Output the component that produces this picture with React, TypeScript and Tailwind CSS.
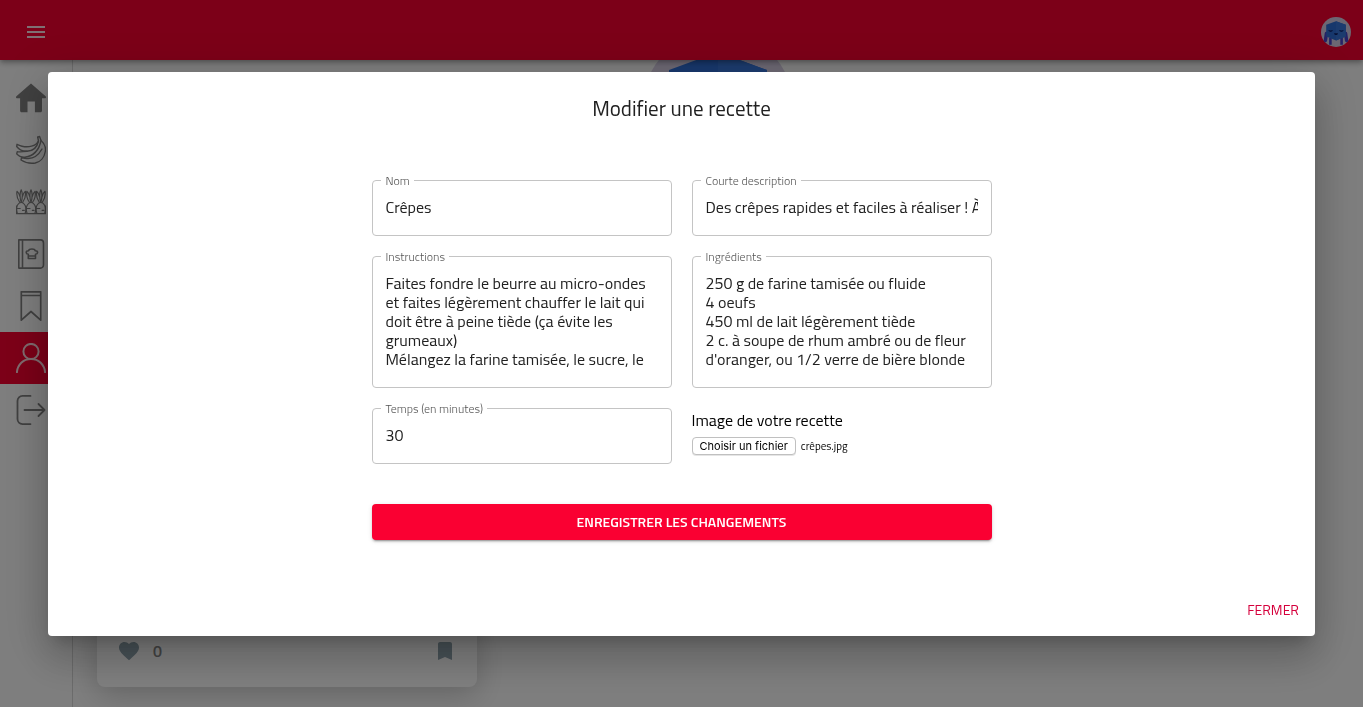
import type { ReactNode } from "react";

const ICON = "h-[30px] w-[30px] shrink-0";

function HomeIcon() {
  return (
    <svg viewBox="0 0 30 30" className={ICON} fill="currentColor">
      <path d="M15 .5 29.600 13.300c.8.8.3 1.900-.7 1.900H26v12.600c0 .9-.6 1.500-1.500 1.500h-5.600V18.500h-7.400v10.800H5.600c-.9 0-1.500-.6-1.500-1.500V15.200H1.100c-1 0-1.500-1.100-.7-1.900z" />
    </svg>
  );
}

function BananaIcon() {
  return (
    <svg viewBox="0 0 30 30" className={ICON} fill="none" stroke="currentColor" strokeWidth="1.400" strokeLinecap="round" strokeLinejoin="round">
      <path d="M21.700 2.200 23.600 1.500 25 5.500c3.500 3 5 7 4.300 11-1 6-5 10.500-10 11.500-5 .8-10-.2-14.300-3l.5-2.200 3.500.4" />
      <path d="M21.700 2.200 22.500 6C20 11.500 12 12.500 6 11.200 4 10.800 2.500 10 1 9.300L.7 11.500C3 14.500 7 16.500 11 16.300" />
      <path d="M22.500 6C21 12.500 17 16.200 11 16.300 7 16.500 4 17 1.200 16.800L.7 18.800C3 21.500 6 22.500 9 22.200 17 21 23 15.500 25 5.500" />
      <path d="M9 23.200C16 24.500 22 21 26 14" />
    </svg>
  );
}

function CarrotsIcon() {
  return (
    <svg viewBox="0 0 30 30" className={ICON} fill="none" stroke="currentColor" strokeWidth="1.200" strokeLinecap="round" strokeLinejoin="round">
      {[0, 9.800, 19.600].map((x) => (
        <g key={x} transform={`translate(${x} 0)`}>
          <path d="M5.200 15.500C3.600 10 3.600 6 5.200 2.800 6.800 6 6.800 10 5.200 15.500M3.800 15.500C1.200 12 .4 8 1 4.300 2.400 5.500 3.400 7.500 3.800 9.500M6.600 15.500c2.600-3.500 3.400-7.500 2.800-11.200C8 5.500 7 7.500 6.600 9.500" />
          <path d="M1.300 26.500C.1 23 .3 20 1.500 18c.9-1.600 2.200-2.500 3.700-2.500s2.800.9 3.700 2.500c1.200 2 1.400 5 .2 8.500M1.500 21.500h2.700M6.500 23.300h1.800" />
        </g>
      ))}
      <path d="M.6 19v7.700h28.800V19" />
    </svg>
  );
}

function RecipeBookIcon() {
  return (
    <svg viewBox="0 0 30 30" className={ICON} fill="none" stroke="currentColor" strokeWidth="1.600" strokeLinejoin="round">
      <path d="M2.800.9h21.700a3 3 0 0 1 3 3v22.200a3 3 0 0 1-3 3H2.800zM6.500.9v28.200" />
      <path d="M12.300 19.500v-4.200c-3-.5-2.600-3.500.2-3.500.8-2.500 6-2.500 6.800 0 2.800 0 3.200 3 .2 3.500v4.200zM12.300 17h7.200" />
    </svg>
  );
}

function SavedIcon() {
  return (
    <svg viewBox="0 0 30 30" className={ICON} fill="none" stroke="currentColor" strokeWidth="1.700" strokeLinejoin="round">
      <path d="M5.300.8h19.400v28.400L15 20.500l-9.700 8.700zM5.300 4.500h19.400" />
    </svg>
  );
}

function UserIcon() {
  return (
    <svg viewBox="0 0 30 30" className={ICON} fill="none" stroke="currentColor" strokeWidth="2" strokeLinecap="round">
      <circle cx="15" cy="8.500" r="7.600" />
      <path d="M.9 29.500C1.500 21.500 7.300 16 15 16s13.500 5.500 14.100 13.500" />
    </svg>
  );
}

function LogoutIcon() {
  return (
    <svg viewBox="0 0 30 30" className={ICON} fill="none" stroke="currentColor" strokeWidth="1.800" strokeLinecap="round" strokeLinejoin="round">
      <path d="M14.500.9H6.500a5 5 0 0 0-5 5v18.200a5 5 0 0 0 5 5h8M8.500 15h20M22.500 9l6 6-6 6" />
    </svg>
  );
}

function Mascot({ className }: { className: string }) {
  return (
    <svg viewBox="0 0 150 150" className={className} role="img" aria-label="Avatar">
      <circle cx="75" cy="75" r="75" fill="#d9cfe6" />
      <path d="M27 82 22 118M123 82l5 36" stroke="#4a45cc" strokeWidth="17" strokeLinecap="round" />
      <path d="M47 105v34M103 105v34" stroke="#4a45cc" strokeWidth="13" />
      <path d="M75 21 124 39v58L75 118 26 97V39z" fill="#2f6fd8" />
      <path d="M75 21 124 39v58L75 118z" fill="#3877dc" />
      <path d="M38 68q11 8 20 0M92 68q11 8 20 0M67 84q8 10 16 0z" fill="#10246c" stroke="#10246c" strokeWidth="5" />
    </svg>
  );
}

const navItems: { label: string; icon: ReactNode; active?: boolean }[] = [
  { label: "Accueil", icon: <HomeIcon /> },
  { label: "Fruits", icon: <BananaIcon /> },
  { label: "Légumes", icon: <CarrotsIcon /> },
  { label: "Recettes", icon: <RecipeBookIcon /> },
  { label: "Favoris", icon: <SavedIcon /> },
  { label: "Profil", icon: <UserIcon />, active: true },
  { label: "Déconnexion", icon: <LogoutIcon /> },
];

const instructions = `Faites fondre le beurre au micro-ondes et faites légèrement chauffer le lait qui doit être à peine tiède (ça évite les grumeaux)
Mélangez la farine tamisée, le sucre, le`;

const ingredients = `250 g de farine tamisée ou fluide
4 oeufs
450 ml de lait légèrement tiède
2 c. à soupe de rhum ambré ou de fleur d'oranger, ou 1/2 verre de bière blonde`;

function Field({ id, label, value, multiline }: { id: string; label: string; value: string; multiline?: boolean }) {
  return (
    <div className="relative rounded border border-[#c4c4c4] px-[13px] pt-[17px] pb-[18px] text-base leading-[19px] text-[#212121]">
      <label htmlFor={id} className="absolute -top-2 left-2 bg-white pr-1 pl-[5px] text-xs leading-4 font-light text-[#555555]">
        {label}
      </label>
      {multiline ? (
        <textarea id={id} rows={5} defaultValue={value} className="block w-full resize-none overflow-hidden outline-none" />
      ) : (
        <input id={id} type="text" defaultValue={value} className="block h-[19px] w-full outline-none" />
      )}
    </div>
  );
}

export default function App() {
  return (
    <div className="flex min-h-screen flex-col bg-[#fdfdfd] font-['Titillium_Web','Roboto',sans-serif]">
      <header className="fixed inset-x-0 top-0 z-10 flex h-[60px] items-center justify-between bg-[#f80030] px-3 pt-1 shadow-[0_2px_4px_-1px_rgba(0,0,0,0.2),0_4px_5px_rgba(0,0,0,0.14),0_1px_10px_rgba(0,0,0,0.12)]">
        <button type="button" aria-label="Menu" className="p-3 text-[#ffe0e6]">
          <svg viewBox="0 0 24 24" className="h-6 w-6" fill="currentColor">
            <path d="M3 18h18v-2H3v2zm0-5h18v-2H3v2zm0-7v2h18V6H3z" />
          </svg>
        </button>
        <Mascot className="h-[30px] w-[30px]" />
      </header>

      <div className="flex grow">
        <nav className="w-[73px] shrink-0 border-r border-[#d8d8d8] pt-[72px]">
          {navItems.map((item) => (
            <a
              key={item.label}
              href="#"
              aria-label={item.label}
              className={item.active ? "flex h-[52px] items-center bg-[#f80030] px-4 text-[#ffd5dd]" : "flex h-[52px] items-center px-4 text-[#808080]"}
            >
              {item.icon}
            </a>
          ))}
        </nav>
        <main className="flex grow flex-col px-6 pt-[31px] pb-5">
          <Mascot className="h-[150px] w-[150px] self-center" />
          <article className="mt-auto flex w-[380px] max-w-full items-center rounded-lg bg-white px-5 pt-10 pb-6 text-[#90a4ae] shadow-[0_8px_30px_rgba(0,0,0,0.2)]">
            <svg viewBox="0 0 24 24" className="h-6 w-6" fill="currentColor">
              <path d="m12 21.350-1.450-1.320C5.400 15.360 2 12.280 2 8.500 2 5.420 4.420 3 7.500 3c1.740 0 3.410.81 4.500 2.090C13.090 3.810 14.760 3 16.500 3 19.580 3 22 5.420 22 8.500c0 3.780-3.400 6.860-8.550 11.540L12 21.350z" />
            </svg>
            <span className="ml-3 text-base leading-6 font-semibold text-[#888888]">0</span>
            <svg viewBox="0 0 24 24" className="ml-auto h-6 w-6" fill="currentColor">
              <path d="M17 3H7c-1.100 0-2 .9-2 2v16l7-3 7 3V5c0-1.100-.9-2-2-2z" />
            </svg>
          </article>
        </main>
      </div>

      <div className="fixed inset-0 z-20 flex items-center justify-center bg-black/50 px-12">
        <div
          role="dialog"
          aria-modal="true"
          aria-labelledby="dialog-title"
          className="flex max-h-full w-full flex-col rounded bg-white shadow-[0_11px_15px_-7px_rgba(0,0,0,0.2),0_24px_38px_3px_rgba(0,0,0,0.14),0_9px_46px_8px_rgba(0,0,0,0.12)]"
        >
          <h2 id="dialog-title" className="px-6 py-5 text-center text-[21px] leading-8 text-[#212121]">
            Modifier une recette
          </h2>
          <form className="mx-auto grid w-[620px] max-w-full grid-cols-2 gap-5 pt-9 pb-11">
            <Field id="name" label="Nom" value="Crêpes" />
            <Field id="description" label="Courte description" value="Des crêpes rapides et faciles à réaliser ! À" />
            <Field id="instructions" label="Instructions" value={instructions} multiline />
            <Field id="ingredients" label="Ingrédients" value={ingredients} multiline />
            <Field id="time" label="Temps (en minutes)" value="30" />
            <div className="text-black">
              <p className="text-base leading-6">Image de votre recette</p>
              <div className="mt-[5px] flex items-center gap-[5px] text-[11px] leading-4">
                <label htmlFor="image" className="rounded border border-[#c0c0c0] bg-white px-[7px] font-['Inter',sans-serif] shadow-[0_1px_0_rgba(0,0,0,0.1)]">
                  Choisir un fichier
                </label>
                <input id="image" type="file" className="sr-only" />
                <span>crêpes.jpg</span>
              </div>
            </div>
            <button
              type="submit"
              className="col-span-2 mt-5 h-9 rounded bg-[#fa0032] text-sm font-semibold text-white shadow-[0_3px_1px_-2px_rgba(0,0,0,0.2),0_2px_2px_rgba(0,0,0,0.14),0_1px_5px_rgba(0,0,0,0.12)]"
            >
              ENREGISTRER LES CHANGEMENTS
            </button>
          </form>
          <div className="flex justify-end p-2">
            <button type="button" className="h-9 rounded px-2 text-sm text-[#d5003c]">
              FERMER
            </button>
          </div>
        </div>
      </div>
    </div>
  );
}
